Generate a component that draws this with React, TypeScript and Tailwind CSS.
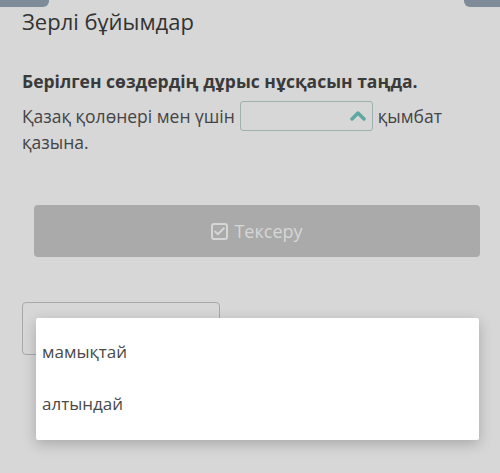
import { Check } from "lucide-react";

export default function App() {
    return (
        <div
            className="relative w-[500px] h-[473px] overflow-hidden bg-[#d7d7d7] text-[#3b3b3b]"
            style={{ fontFamily: '"Open Sans", "Noto Sans", sans-serif' }}
        >
            <div className="flex justify-between">
                <div className="w-[49px] h-[7px] bg-[#7d8c98] rounded-br-md" />
                <div className="w-[36px] h-[7px] bg-[#7d8c98] rounded-bl-md" />
            </div>

            <div className="px-[22px]">
                <h1 className="text-[22px] leading-[26px] mt-[1px] text-[#333]">Зерлі бұйымдар</h1>

                <p className="mt-[36px] text-[17.5px] leading-[22px] font-bold text-[#3a3a3a]">
                    Берілген сөздердің дұрыс нұсқасын таңда.
                </p>

                <div className="mt-[9px] text-[17.5px] leading-[25px] text-[#444]">
                    <div className="flex items-center gap-[5px]">
                        <span>Қазақ қолөнері мен үшін</span>
                        <div className="w-[133px] h-[30px] border border-[#9fb1ae] rounded-[3px] flex items-center justify-end pr-[6px]">
                            <svg width="16" height="12" viewBox="0 0 16 12">
                                <path d="M2 9 L8 3 L14 9" fill="none" stroke="#5ea7a3" strokeWidth="3.5" strokeLinecap="round" strokeLinejoin="round" />
                            </svg>
                        </div>
                        <span>қымбат</span>
                    </div>
                    <div className="-mt-[1px]">қазына.</div>
                </div>

                <button className="mt-[50px] ml-[12px] w-[446px] h-[52px] rounded-[4px] bg-[#aaaaaa] text-[#d6d6d6] text-[18px] flex items-center justify-center gap-[6px]">
                    <span className="w-[17px] h-[17px] border-2 border-[#d6d6d6] rounded-[3px] flex items-center justify-center">
                        <Check size={13} strokeWidth={3.5} />
                    </span>
                    Тексеру
                </button>

                <div className="mt-[45px] w-[198px] h-[53px] border border-[#a9a9a9] rounded-[4px]" />
            </div>

            <div className="absolute left-[36px] top-[318px] w-[443px] h-[122px] bg-white rounded-[2px] shadow-[0_4px_14px_rgba(0,0,0,0.22)] pl-[6px] pt-[21px] text-[17px] text-[#4a4a4a]">
                <div className="h-[26px] leading-[26px]">мамықтай</div>
                <div className="mt-[26px] h-[26px] leading-[26px]">алтындай</div>
            </div>
        </div>
    );
}
